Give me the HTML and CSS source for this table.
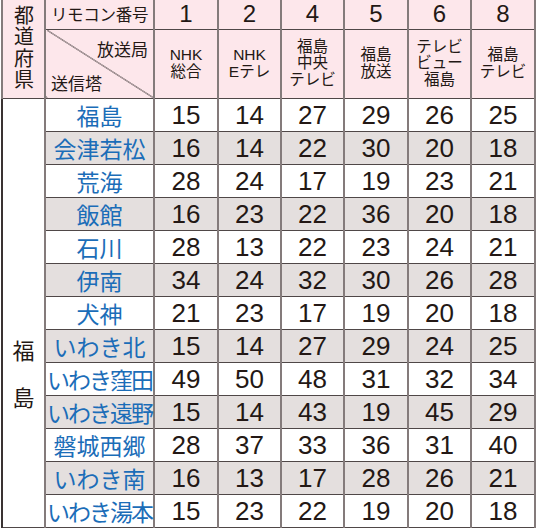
FILE: index.html
```
<!DOCTYPE html>
<html lang="ja">
<head>
<meta charset="utf-8">
<title>リモコン番号一覧</title>
<link rel="stylesheet" href="styles.css">
</head>
<body>
<table class="tbl">
  <colgroup>
    <col class="c-pref"><col class="c-site">
    <col class="c-a"><col class="c-b"><col class="c-b"><col class="c-a"><col class="c-b"><col class="c-a">
  </colgroup>
  <thead>
    <tr class="h1">
      <th rowspan="2" class="pref-h"><div class="vert vert-h">都道府県</div></th>
      <th class="remo">リモコン番号</th>
      <th class="num-h">1</th><th class="num-h">2</th><th class="num-h">4</th><th class="num-h">5</th><th class="num-h">6</th><th class="num-h">8</th>
    </tr>
    <tr class="h2">
      <th class="diag"><div class="diag-in"><span class="kyoku">放送局</span><span class="tou">送信塔</span></div></th>
      <th class="st">NHK<br>総合</th>
      <th class="st">NHK<br>Eテレ</th>
      <th class="st">福島<br>中央<br>テレビ</th>
      <th class="st">福島<br>放送</th>
      <th class="st">テレビ<br>ビュー<br>福島</th>
      <th class="st">福島<br>テレビ</th>
    </tr>
  </thead>
  <tbody>
    <tr><td rowspan="13" class="pref"><div class="vert vert-b">福島</div></td><td class="site">福島</td><td>15</td><td>14</td><td>27</td><td>29</td><td>26</td><td>25</td></tr>
    <tr class="alt"><td class="site">会津若松</td><td>16</td><td>14</td><td>22</td><td>30</td><td>20</td><td>18</td></tr>
    <tr><td class="site">荒海</td><td>28</td><td>24</td><td>17</td><td>19</td><td>23</td><td>21</td></tr>
    <tr class="alt"><td class="site">飯館</td><td>16</td><td>23</td><td>22</td><td>36</td><td>20</td><td>18</td></tr>
    <tr><td class="site">石川</td><td>28</td><td>13</td><td>22</td><td>23</td><td>24</td><td>21</td></tr>
    <tr class="alt"><td class="site">伊南</td><td>34</td><td>24</td><td>32</td><td>30</td><td>26</td><td>28</td></tr>
    <tr><td class="site">犬神</td><td>21</td><td>23</td><td>17</td><td>19</td><td>20</td><td>18</td></tr>
    <tr class="alt"><td class="site">いわき北</td><td>15</td><td>14</td><td>27</td><td>29</td><td>24</td><td>25</td></tr>
    <tr><td class="site tight">いわき窪田</td><td>49</td><td>50</td><td>48</td><td>31</td><td>32</td><td>34</td></tr>
    <tr class="alt"><td class="site tight">いわき遠野</td><td>15</td><td>14</td><td>43</td><td>19</td><td>45</td><td>29</td></tr>
    <tr><td class="site">磐城西郷</td><td>28</td><td>37</td><td>33</td><td>36</td><td>31</td><td>40</td></tr>
    <tr class="alt"><td class="site">いわき南</td><td>16</td><td>13</td><td>17</td><td>28</td><td>26</td><td>21</td></tr>
    <tr><td class="site tight">いわき湯本</td><td>15</td><td>23</td><td>22</td><td>19</td><td>20</td><td>18</td></tr>
  </tbody>
</table>
</body>
</html>
```
FILE: styles.css
```
html, body {
  margin: 0;
  padding: 0;
  background: #ffffff;
  overflow: hidden;
}

body {
  font-family: "Liberation Sans", "Noto Sans CJK JP", sans-serif;
  color: #231815;
}

.tbl {
  margin-left: 1px;
  width: 533px;
  table-layout: fixed;
  border-collapse: collapse;
  border-left: 2px solid #3a3333;
  border-right: 2px solid #3a3333;
}

.c-pref { width: 43px; }
.c-site { width: 109px; }
.c-a { width: 64px; }
.c-b { width: 63px; }

.tbl th,
.tbl td {
  padding: 0;
  border-left: 2px solid #847b7b;
  border-right: 2px solid #847b7b;
  border-top: 1px solid #4f4747;
  border-bottom: 1px solid #4f4747;
  text-align: center;
  vertical-align: middle;
  font-weight: normal;
}

.tbl thead th {
  background: #fde7eb;
  color: #231815;
}

.tbl .h1 th {
  border-top: none;
}

.h1 { height: 29px; }
.h2 { height: 68px; }
.tbl tbody tr { height: 33px; }

.pref-h {
  border-left: 2px solid #3a3333;
}

.vert {
  display: inline-block;
  writing-mode: vertical-rl;
  font-family: "Noto Sans CJK JP", sans-serif;
}

.vert-h {
  font-size: 20px;
  line-height: 22px;
  letter-spacing: 1.5px;
  margin-top: 2px;
}

.remo {
  font-family: "Noto Sans CJK JP", sans-serif;
  font-size: 16.5px;
  line-height: 20px;
  letter-spacing: -0.3px;
}

.num-h {
  font-size: 24px;
  line-height: 26px;
}

.diag {
  background: linear-gradient(to top right, #fde7eb calc(50% - 0.7px), #2f2929 50%, #fde7eb calc(50% + 0.7px)) !important;
}

.diag-in {
  height: 68px;
  box-sizing: border-box;
  display: flex;
  flex-direction: column;
  justify-content: space-between;
  padding: 9px 5px 5px 5px;
  font-family: "Noto Sans CJK JP", sans-serif;
  font-size: 17px;
  line-height: 20px;
}

.kyoku { align-self: flex-end; }
.tou { align-self: flex-start; }

.st {
  font-size: 15.5px;
  line-height: 16.5px;
}

.tbl tbody td {
  font-size: 26px;
  line-height: 28px;
  color: #231815;
}

.tbl tbody tr.alt td {
  background: #e4dfde;
}

.tbl tbody td.pref {
  background: #ffffff !important;
  vertical-align: top;
  border-left: 2px solid #3a3333;
  padding-top: 241px;
}

.vert-b {
  font-size: 22px;
  line-height: 24px;
  letter-spacing: 25px;
  color: #231815;
}

.tbl tbody td.site {
  font-family: "Noto Sans CJK JP", sans-serif;
  font-size: 23px;
  line-height: 28px;
  color: #1b6db8;
  white-space: nowrap;
}

.tbl tbody td.site.tight {
  letter-spacing: -2px;
}
```
